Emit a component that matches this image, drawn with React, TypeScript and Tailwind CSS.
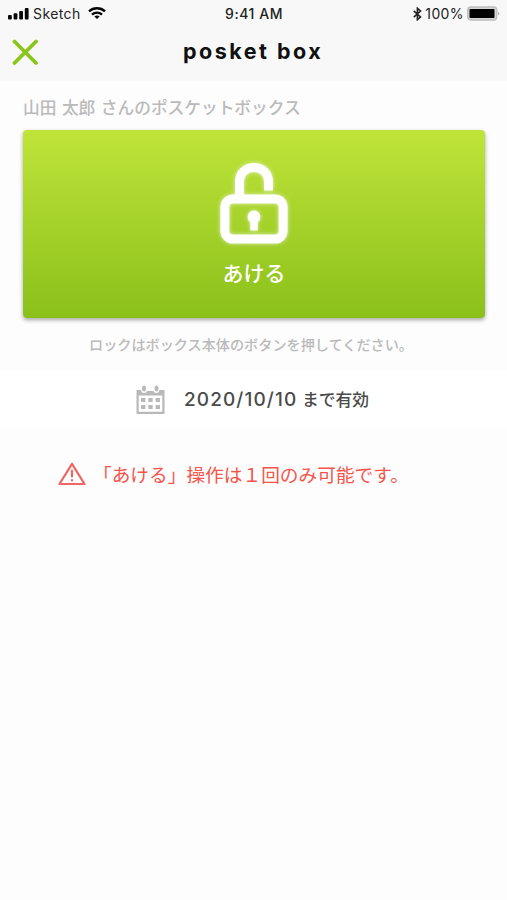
import type { ReactNode } from 'react';

const jp = "font-['Noto_Sans_CJK_JP',sans-serif]";

function StatusBar() {
  return (
    <div className="flex h-[27px] items-center font-[Inter,sans-serif] text-[#222]">
      <div className="flex flex-1 items-center pl-2">
        <svg width="21" height="12" viewBox="0 0 21 12" fill="#080808">
          <rect x="0" y="7" width="3.8" height="4.5" rx="1" />
          <rect x="5.6" y="5.2" width="3.8" height="6.3" rx="1" />
          <rect x="11.2" y="2.9" width="3.8" height="8.6" rx="1" />
          <rect x="16.8" y="0" width="3.8" height="11.5" rx="1" />
        </svg>
        <span className="ml-1 w-[48px] text-[14px] tracking-[0.4px]">Sketch</span>
        <svg className="ml-[7px]" width="18" height="13" viewBox="0 0 18 13" fill="none" stroke="#080808" strokeWidth="2.4">
          <path d="M1 4.4C5.4 0.2 12.6 0.2 17 4.4" />
          <path d="M4 7.6C6.8 4.9 11.2 4.9 14 7.6" />
          <path d="M6.3 9.4C7.8 8.1 10.2 8.1 11.7 9.4L9 12.1Z" fill="#080808" stroke="none" />
        </svg>
      </div>
      <span className="text-[14px] font-medium tracking-[0.55px]">9:41 AM</span>
      <div className="flex flex-1 items-center justify-end pr-[7px]">
        <svg width="9" height="14" viewBox="0 0 9 14" fill="none" stroke="#222" strokeWidth="1.6">
          <path d="M0.8 3.8L7.5 10L4.4 12.7V1.3L7.5 4L0.8 10.2" />
        </svg>
        <span className="ml-[3px] text-[14px] tracking-[0.4px]">100%</span>
        <svg className="ml-[3px]" width="33" height="15" viewBox="0 0 33 15">
          <rect x="0.7" y="1" width="29" height="13" rx="3" fill="#d6d6d6" stroke="#bdbdbd" strokeWidth="1.4" />
          <rect x="2.5" y="3" width="25" height="9" rx="0.7" fill="#000" />
          <path d="M31 5.5Q34 7.5 31 9.5Z" fill="#b5b5b5" />
        </svg>
      </div>
    </div>
  );
}

function Row({ children }: { children: ReactNode }) {
  return <div className="flex h-[57px] items-center bg-white pl-[136px]">{children}</div>;
}

function LockIcon() {
  return (
    <svg
      className="drop-shadow-[0_0_2px_rgba(255,255,255,0.7)]"
      width="72"
      height="86"
      viewBox="0 0 72 86"
      fill="none"
      stroke="#fff"
      strokeWidth="9"
    >
      <path d="M21.5 38V22C21.5 2.8 50.5 2.8 50.5 22V30.5" />
      <rect x="6.9" y="38.9" width="58.2" height="40.2" rx="8" />
      <path d="M36 50.5A6.5 6.5 0 0 1 39.7 62.2V70.5H32.3V62.2A6.5 6.5 0 0 1 36 50.5Z" fill="#fff" stroke="none" />
    </svg>
  );
}

function CalendarIcon() {
  return (
    <svg width="29" height="30" viewBox="0 0 29 30" fill="#b9b9b9">
      <path fillRule="evenodd" d="M0.5 5H5Q5.4 8 8 8Q10.6 8 11 6H17.5Q18 8 20.5 8Q23 8 23.5 5H28.5V29H0.5ZM2.7 10.5V26.8H26.3V10.5Z" />
      <ellipse cx="8" cy="3.4" rx="2" ry="2.9" />
      <ellipse cx="20.5" cy="3.4" rx="2" ry="2.9" />
      {[13, 20].map((y) =>
        [5, 12.3, 19.6].map((x) => <rect key={`${x}-${y}`} x={x} y={y} width="4.4" height="4" />)
      )}
    </svg>
  );
}

export default function App() {
  return (
    <div className={`min-h-[900px] bg-[#fdfdfd] ${jp}`}>
      <header className="h-[81px] bg-[#f8f8f8]">
        <StatusBar />
        <div className="flex items-center pl-3 pt-px">
          <button className="flex h-[48px] w-[27px] items-center" aria-label="閉じる">
            <svg width="27" height="27" viewBox="0 0 27 27" fill="none" stroke="#8ac51b" strokeWidth="3.8" strokeLinecap="round">
              <path d="M2.5 2.5L24 24M24 2.5L2.5 24" />
            </svg>
          </button>
          <h1 className="ml-[144px] whitespace-nowrap font-[Inter,sans-serif] text-[21.5px] font-bold leading-none tracking-[2.5px] text-[#111]">
            posket box
          </h1>
        </div>
      </header>

      <main>
        <p className="flex h-[49px] items-center whitespace-nowrap pl-[23px] pt-[4px] text-[16.7px] font-medium text-[#bababa] [word-spacing:1.8px]">
          山田 太郎 さんのポスケットボックス
        </p>
        <button className="mx-[23px] flex h-[188px] w-[462px] flex-col items-center rounded-[4px] bg-linear-to-b from-[#bfe439] to-[#8bc01a] pt-[30px] text-white shadow-[0_2px_4px_rgba(0,0,0,0.35)]">
          <LockIcon />
          <span className="mt-[11px] text-[21px] font-medium leading-[30px]">あける</span>
        </button>
        <p className="flex h-[53px] items-center whitespace-nowrap pl-[89px] text-[14.15px] font-medium text-[#bababa]">
          ロックはボックス本体のボタンを押してください。
        </p>
        <Row>
          <CalendarIcon />
          <p className="ml-[19px] flex items-baseline whitespace-nowrap pt-px font-medium text-[#4a4a4a]">
            <span className="w-[118px] font-[Inter,sans-serif] text-[19px] tracking-[1.1px]">2020/10/10</span>
            <span className="text-[16.8px]">まで有効</span>
          </p>
        </Row>
        <div className="flex h-[92px] items-center pl-[58px] text-[#f5554a]">
          <svg width="28" height="24" viewBox="0 0 28 24" fill="none" stroke="#ee6660" strokeWidth="2.2" strokeLinejoin="round" strokeLinecap="round">
            <path d="M14 1.8L26.5 22H1.5Z" />
            <path d="M14 8.5V14.5M14 18V18.4" />
          </svg>
          <p className="ml-[7px] whitespace-nowrap pt-px text-[18.7px]">「あける」操作は１回のみ可能です。</p>
        </div>
      </main>
    </div>
  );
}
